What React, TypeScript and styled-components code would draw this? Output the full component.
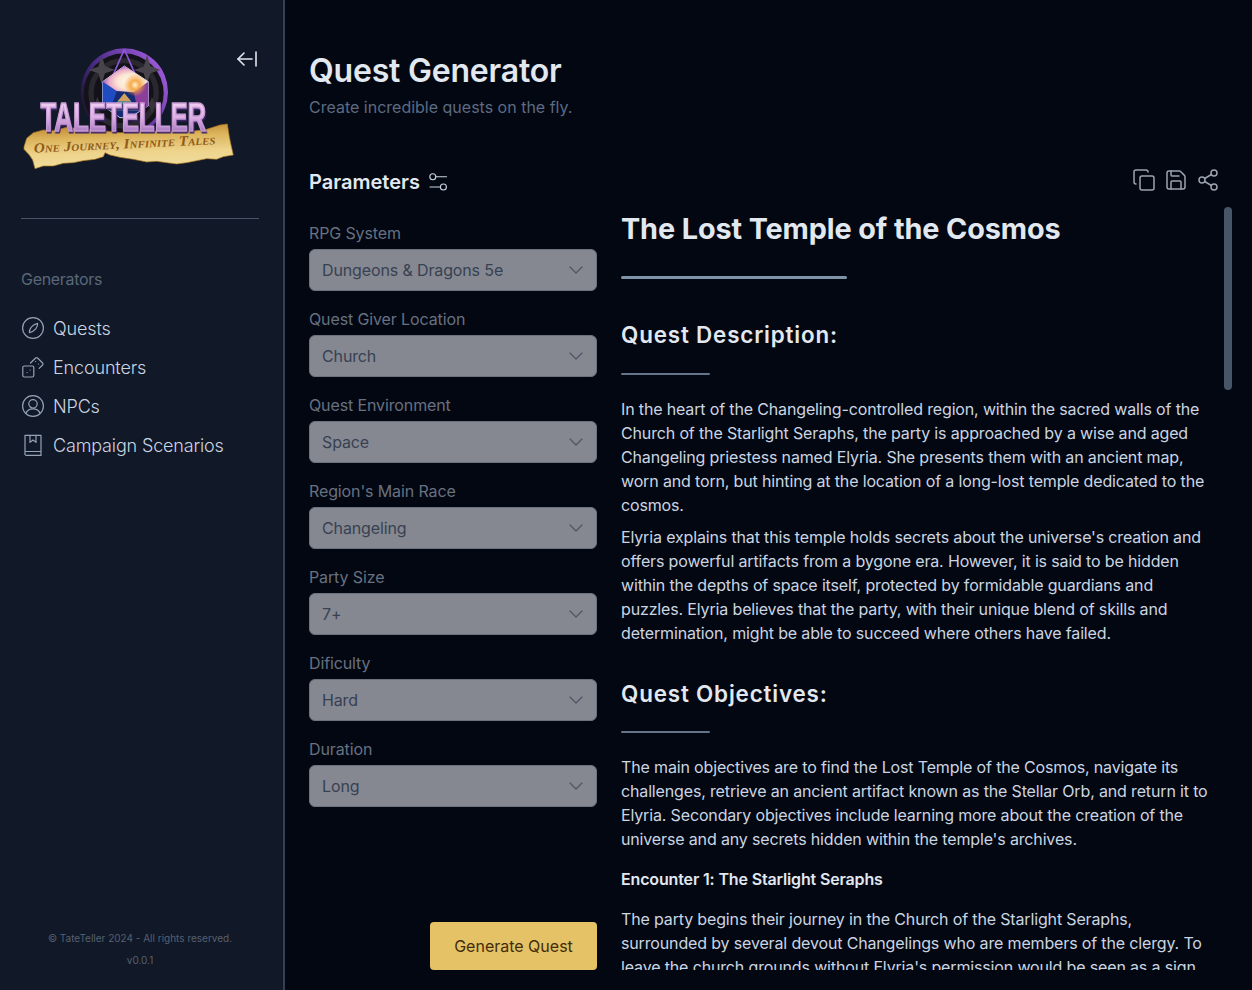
import React from 'react';
import styled, { createGlobalStyle } from 'styled-components';
import { ArrowLeftFromLine, ChevronDown, Copy, Save, Share2 } from 'lucide-react';

const GlobalStyle = createGlobalStyle`
  html, body { margin: 0; padding: 0; height: 100%; background: #030712; overflow: hidden; }
  * { box-sizing: border-box; }
  body { font-family: Inter, "Noto Sans", sans-serif; }
`;

const Page = styled.div`
  display: flex;
  height: 990px;
  width: 1252px;
`;

const Sidebar = styled.aside`
  width: 285px;
  flex-shrink: 0;
  background: #111827;
  border-right: 2px solid #334155;
  padding: 0 24px 0 21px;
  display: flex;
  flex-direction: column;
  position: relative;
`;

const LogoWrap = styled.div`
  height: 219px;
  padding-top: 40px;
  border-bottom: 1px solid #475569;
  position: relative;
  svg.logo { display: block; margin-left: -1px; }
`;

const Collapse = styled.button`
  position: absolute;
  top: 47px;
  right: 0;
  width: 24px;
  height: 24px;
  padding: 0;
  border: 0;
  background: none;
  color: #e2e8f0;
`;

const SectionLabel = styled.div`
  margin-top: 50px;
  font-size: 16px;
  line-height: 20px;
  letter-spacing: -0.3px;
  color: #5a6779;
`;

const Nav = styled.nav`
  margin-top: 25px;
  display: flex;
  flex-direction: column;
  gap: 11px;
`;

const NavItem = styled.a`
  display: flex;
  align-items: center;
  gap: 8px;
  height: 28px;
  font-size: 18px;
  letter-spacing: -0.15px;
  color: #cbd5e1;
  font-weight: 300;
  svg { flex-shrink: 0; color: #94a3b8; }
`;

const SideFooter = styled.footer`
  margin-top: auto;
  padding-bottom: 19px;
  text-align: center;
  font-size: 10px;
  line-height: 22px;
  color: #566070;
`;

const Main = styled.main`
  flex: 1;
  min-width: 0;
  padding: 49px 20px 20px 24px;
  display: flex;
  flex-direction: column;
`;

const Title = styled.h1`
  margin: 0;
  font-size: 32px;
  line-height: 44px;
  letter-spacing: -0.2px;
  font-weight: 600;
  color: #e2e8f0;
`;

const Subtitle = styled.p`
  margin: 2px 0 0;
  font-size: 16px;
  line-height: 24px;
  color: #5c6b82;
`;

const Columns = styled.div`
  flex: 1;
  min-height: 0;
  margin-top: 49px;
  display: grid;
  grid-template-columns: 288px 1fr;
  column-gap: 24px;
`;

const FormColumn = styled.section`
  display: flex;
  flex-direction: column;
`;

const ParamHeading = styled.h2`
  margin: 0;
  display: flex;
  align-items: center;
  gap: 8px;
  height: 28px;
  font-size: 20px;
  font-weight: 600;
  color: #e2e8f0;
  svg { color: #cbd5e1; }
`;

const Fields = styled.div`
  margin-top: 27px;
  display: flex;
  flex-direction: column;
  gap: 18px;
`;

const Field = styled.div`
  display: flex;
  flex-direction: column;
  gap: 4px;
`;

const FieldLabel = styled.label`
  font-size: 16px;
  line-height: 20px;
  height: 22px;
  letter-spacing: -0.12px;
  color: #677180;
`;

const SelectBox = styled.div`
  height: 42px;
  padding: 0 8px 0 12px;
  display: flex;
  align-items: center;
  justify-content: space-between;
  background: #858891;
  border: 1px solid #6b7280;
  border-radius: 6px;
  font-size: 16px;
  letter-spacing: -0.13px;
  color: #374151;
  svg { color: #4b5563; }
`;

const GenerateButton = styled.button`
  margin-top: auto;
  align-self: flex-end;
  width: 167px;
  height: 48px;
  border: 0;
  border-radius: 4px;
  background: #e4c265;
  color: #422d0a;
  font-family: inherit;
  font-size: 16px;
  font-weight: 400;
`;

const ResultColumn = styled.section`
  display: flex;
  flex-direction: column;
  min-height: 0;
  position: relative;
`;

const Toolbar = styled.div`
  height: 39px;
  flex-shrink: 0;
  padding-right: 12px;
  display: flex;
  justify-content: flex-end;
  gap: 8px;
`;

const ToolIcon = styled.span`
  display: block;
  width: 24px;
  height: 24px;
  color: #9ca3af;
`;

const Scroller = styled.div`
  flex: 1;
  min-height: 0;
  overflow: hidden;
  padding-right: 22px;
`;

const Thumb = styled.div`
  position: absolute;
  top: 39px;
  right: 0;
  width: 8px;
  height: 183px;
  border-radius: 4px;
  background: #475569;
`;

const Article = styled.article`
  font-size: 16px;
  line-height: 24px;
  letter-spacing: -0.15px;
  color: #cbd5e1;
`;

const QuestTitle = styled.h2`
  margin: 0;
  font-size: 28.8px;
  line-height: 44px;
  letter-spacing: -0.1px;
  font-weight: 700;
  color: #e2e8f0;
`;

const Rule = styled.div<{ $w: number; $h: number; $top: number; $bottom: number; $color: string }>`
  width: ${(p) => p.$w}px;
  height: ${(p) => p.$h}px;
  margin-top: ${(p) => p.$top}px;
  margin-bottom: ${(p) => p.$bottom}px;
  border-radius: 2px;
  background: ${(p) => p.$color};
`;

const SectionTitle = styled.h3<{ $top?: number }>`
  margin: ${(p) => p.$top ?? 0}px 0 0;
  font-size: 22.4px;
  line-height: 32px;
  font-weight: 600;
  letter-spacing: 0.83px;
  color: #e2e8f0;
`;

const Para = styled.p<{ $bottom?: number }>`
  margin: 0 0 ${(p) => p.$bottom ?? 8}px;
`;

const Strong = styled.p`
  margin: 0 0 16px;
  font-weight: 600;
  color: #e2e8f0;
`;

const fields = [
  ['RPG System', 'Dungeons & Dragons 5e'],
  ['Quest Giver Location', 'Church'],
  ['Quest Environment', 'Space'],
  ["Region's Main Race", 'Changeling'],
  ['Party Size', '7+'],
  ['Dificulty', 'Hard'],
  ['Duration', 'Long'],
];

const iconProps = {
  width: 24,
  height: 24,
  viewBox: '0 0 24 24',
  fill: 'none',
  stroke: 'currentColor',
  strokeWidth: 1.2,
  strokeLinecap: 'round' as const,
  strokeLinejoin: 'round' as const,
};

const CompassIcon = () => (
  <svg {...iconProps}>
    <circle cx="12" cy="12" r="10.4" />
    <path d="M16.6 7.4c.3 3.6-2.6 8-8.2 9.2-.3-3.6 2.6-8 8.2-9.2Z" />
  </svg>
);

const DiceIcon = () => (
  <svg {...iconProps}>
    <rect x="1.8" y="11" width="11" height="11" rx="1.5" />
    <path d="M6 17.5h.1M9 15h.1" />
    <path d="M9.5 8 14.6 3a1.5 1.5 0 0 1 2 0l5 5a1.5 1.5 0 0 1 0 2l-3.4 3.4" />
    <path d="M14.6 6.5h.1M17.5 9h.1" />
  </svg>
);

const UserIcon = () => (
  <svg {...iconProps}>
    <circle cx="12" cy="12" r="10.4" />
    <circle cx="12" cy="9.8" r="4.2" />
    <path d="M4.8 19.5c1.2-3 3.8-4.6 7.2-4.6s6 1.6 7.2 4.6" />
  </svg>
);

const BookIcon = () => (
  <svg {...iconProps}>
    <path d="M4 19.5V2.4h16v20H6a2 2 0 0 1-2-2.9ZM4 18.5h16" />
    <path d="M9 2.4v7l3-2.4 3 2.4v-7" />
  </svg>
);

const SlidersIcon = () => (
  <svg width="20" height="20" viewBox="0 0 20 20" fill="none" stroke="currentColor" strokeWidth="1.1" strokeLinecap="round">
    <circle cx="4.8" cy="4.8" r="3" />
    <path d="M7.8 4.8H18.6" />
    <circle cx="15.4" cy="15" r="3" />
    <path d="M2 15h10.4" />
  </svg>
);

const Logo = () => (
  <svg className="logo" width="220" height="135" viewBox="0 0 660 405" role="img" aria-label="TaleTeller">
    <defs>
      <linearGradient id="letters" x1="0" y1="0" x2="0" y2="1">
        <stop offset="0" stopColor="#f9dcf8" />
        <stop offset="0.5" stopColor="#e0b2e6" />
        <stop offset="1" stopColor="#8d5bae" />
      </linearGradient>
      <linearGradient id="paper" x1="0" y1="0" x2="0.15" y2="1">
        <stop offset="0" stopColor="#b97f27" />
        <stop offset="0.35" stopColor="#dcb45c" />
        <stop offset="0.7" stopColor="#eed48c" />
        <stop offset="1" stopColor="#f0dc9c" />
      </linearGradient>
      <radialGradient id="flare" cx="0.62" cy="0.6" r="0.6">
        <stop offset="0" stopColor="#fffdf5" />
        <stop offset="0.5" stopColor="#fbe6d2" />
        <stop offset="0.8" stopColor="#e9a9c8" />
        <stop offset="1" stopColor="#a66bc0" />
      </radialGradient>
      <radialGradient id="sun" cx="0.5" cy="0.5" r="0.5">
        <stop offset="0" stopColor="#fff6d8" />
        <stop offset="0.4" stopColor="#f5a33c" stopOpacity="0.9" />
        <stop offset="1" stopColor="#f5a33c" stopOpacity="0" />
      </radialGradient>
      <linearGradient id="rim" x1="1" y1="0.2" x2="0" y2="0.8">
        <stop offset="0" stopColor="#a45ee0" />
        <stop offset="0.6" stopColor="#4a2b86" />
        <stop offset="1" stopColor="#14101f" />
      </linearGradient>
    </defs>
    <circle cx="313" cy="156" r="131" fill="url(#rim)" />
    <circle cx="311" cy="160" r="120" fill="#131218" />
    <circle cx="311" cy="160" r="98" fill="none" stroke="#2a282f" strokeWidth="16" />
    <path d="M245 46l10 32 30 12-30 10-10 32-10-32-30-10 30-10Z" fill="#47444b" />
    <path d="M381 46l10 32 30 12-30 10-10 32-10-32-30-10 30-10Z" fill="#47444b" />
    <path d="M232 170l7 18 18 7-18 7-7 18-7-18-18-7 18-7Z" fill="#36343a" />
    <path d="M396 170l7 18 18 7-18 7-7 18-7-18-18-7 18-7Z" fill="#36343a" />
    <path d="M313 28l-40 92M313 28l40 92" stroke="#8d55d8" strokeWidth="5" fill="none" />
    <path d="M313 78l72 47v72l-55 36h-30l-52-36v-72Z" fill="#142a74" stroke="#c9c6e8" strokeWidth="3" strokeLinejoin="round" />
    <path d="M248 125l42 28-16 48-26-4Z" fill="#1f4cc0" />
    <path d="M385 125v72l-30 20-14-60Z" fill="#8b3f9a" />
    <path d="M313 78l72 47-44 32-51-4-42-28Z" fill="url(#flare)" />
    <path d="M313 160l44 52h-88Z" fill="#3f8288" />
    <path d="M313 160l20 24h-40Z" fill="#d3a15f" />
    <circle cx="345" cy="135" r="34" fill="url(#sun)" />
    <path
      d="M12 320 20 295 40 278 70 270 100 272 140 262 220 270 300 278 420 272 500 276 560 268 600 255 622 252 628 290 632 310 640 345 610 350 590 358 560 356 530 362 500 368 470 372 440 368 410 364 380 366 340 358 300 352 270 345 255 338 250 350 225 358 190 362 160 368 130 370 100 378 70 378 45 386 38 360 28 345 12 328Z"
      fill="url(#paper)"
      stroke="#a8741f"
      strokeWidth="2"
    />
    <text
      transform="translate(310 274) scale(0.635 1)"
      textAnchor="middle"
      fontFamily='"Liberation Sans", sans-serif'
      fontWeight="700"
      fontSize="122"
      fill="url(#letters)"
      stroke="#c79bd3"
      strokeWidth="5"
      style={{ filter: 'drop-shadow(4px 5px 0 #3f2768)' }}
    >
      TALETELLER
    </text>
    <text
      x="42"
      y="338"
      transform="rotate(-2.7 42 338)"
      fontFamily='"Liberation Serif", serif'
      fontStyle="italic"
      fontWeight="700"
      fontSize="42"
      fill="#8f5a1a"
      textLength="545"
      lengthAdjust="spacingAndGlyphs"
      style={{ fontVariant: 'small-caps' }}
    >
      One Journey, Infinite Tales
    </text>
  </svg>
);

const App = () => (
  <Page>
    <GlobalStyle />
    <Sidebar>
      <LogoWrap>
        <Logo />
        <Collapse aria-label="Collapse">
          <ArrowLeftFromLine size={24} strokeWidth={1.6} />
        </Collapse>
      </LogoWrap>
      <SectionLabel>Generators</SectionLabel>
      <Nav>
        <NavItem><CompassIcon />Quests</NavItem>
        <NavItem><DiceIcon />Encounters</NavItem>
        <NavItem><UserIcon />NPCs</NavItem>
        <NavItem><BookIcon />Campaign Scenarios</NavItem>
      </Nav>
      <SideFooter>
        <div>© TateTeller 2024 - All rights reserved.</div>
        <div>v0.0.1</div>
      </SideFooter>
    </Sidebar>
    <Main>
      <Title>Quest Generator</Title>
      <Subtitle>Create incredible quests on the fly.</Subtitle>
      <Columns>
        <FormColumn>
          <ParamHeading>
            Parameters
            <SlidersIcon />
          </ParamHeading>
          <Fields>
            {fields.map(([label, value]) => (
              <Field key={label}>
                <FieldLabel>{label}</FieldLabel>
                <SelectBox>
                  {value}
                  <ChevronDown size={24} strokeWidth={1.2} />
                </SelectBox>
              </Field>
            ))}
          </Fields>
          <GenerateButton>Generate Quest</GenerateButton>
        </FormColumn>
        <ResultColumn>
          <Toolbar>
            <ToolIcon><Copy size={24} strokeWidth={1.5} /></ToolIcon>
            <ToolIcon><Save size={24} strokeWidth={1.5} /></ToolIcon>
            <ToolIcon><Share2 size={24} strokeWidth={1.5} /></ToolIcon>
          </Toolbar>
          <Thumb />
          <Scroller>
            <Article>
              <QuestTitle>The Lost Temple of the Cosmos</QuestTitle>
              <Rule $w={226} $h={3} $top={25} $bottom={40} $color="#7f93a8" />
              <SectionTitle>Quest Description:</SectionTitle>
              <Rule $w={89} $h={2} $top={22} $bottom={22} $color="#64748b" />
              <Para>
                In the heart of the Changeling-controlled region, within the sacred walls of the Church of the Starlight Seraphs, the party is approached by a wise and aged Changeling priestess named Elyria. She presents them with an ancient map, worn and torn, but hinting at the location of a long-lost temple dedicated to the cosmos.
              </Para>
              <Para>
                Elyria explains that this temple holds secrets about the universe's creation and offers powerful artifacts from a bygone era. However, it is said to be hidden within the depths of space itself, protected by formidable guardians and puzzles. Elyria believes that the party, with their unique blend of skills and determination, might be able to succeed where others have failed.
              </Para>
              <SectionTitle $top={33}>Quest Objectives:</SectionTitle>
              <Rule $w={89} $h={2} $top={21} $bottom={22} $color="#64748b" />
              <Para $bottom={16}>
                The main objectives are to find the Lost Temple of the Cosmos, navigate its challenges, retrieve an ancient artifact known as the Stellar Orb, and return it to Elyria. Secondary objectives include learning more about the creation of the universe and any secrets hidden within the temple's archives.
              </Para>
              <Strong>Encounter 1: The Starlight Seraphs</Strong>
              <Para>
                The party begins their journey in the Church of the Starlight Seraphs, surrounded by several devout Changelings who are members of the clergy. To leave the church grounds without Elyria's permission would be seen as a sign of disrespect.
              </Para>
            </Article>
          </Scroller>
        </ResultColumn>
      </Columns>
    </Main>
  </Page>
);

export default App;
